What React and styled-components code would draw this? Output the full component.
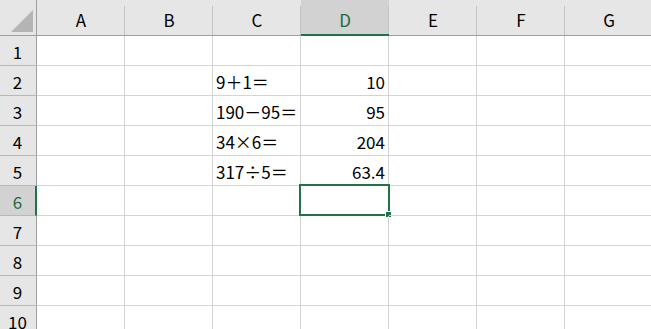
import React from 'react'
import styled, { createGlobalStyle } from 'styled-components'

const GlobalStyle = createGlobalStyle`
  html, body {
    margin: 0;
    padding: 0;
    background: #ffffff;
  }
  body {
    font-family: "Noto Sans CJK JP", "Noto Sans", sans-serif;
    overflow: hidden;
  }
`

const colors = {
  header: '#e6e6e6',
  headerActive: '#d2d2d2',
  headerLine: '#9f9f9f',
  headerSep: '#c4c4c4',
  grid: '#d4d4d4',
  green: '#217346',
  activeText: '#1d6a40',
}

const COLS = ['A', 'B', 'C', 'D', 'E', 'F', 'G']
const ROWS = 10

const cells = {
  2: { C: '9＋1＝', D: '10' },
  3: { C: '190－95＝', D: '95' },
  4: { C: '34×6＝', D: '204' },
  5: { C: '317÷5＝', D: '63.4' },
}

const activeCol = 'D'
const activeRow = 6

const Sheet = styled.div`
  display: grid;
  grid-template-columns: 37px repeat(7, 88px);
  grid-template-rows: 36px repeat(${ROWS}, 30px);
  width: 651px;
  height: 329px;
  overflow: hidden;
  font-size: 17px;
  color: #000;
`

const Corner = styled.div`
  position: relative;
  background: ${colors.header};
  border-right: 1px solid ${colors.headerLine};
  border-bottom: 1px solid ${colors.headerLine};
  box-sizing: border-box;

  &::before {
    content: '';
    position: absolute;
    left: 11px;
    top: 10px;
    width: 0;
    height: 0;
    border-left: 22px solid transparent;
    border-bottom: 22px solid #b4b4b4;
  }
`

const ColHeader = styled.div`
  position: relative;
  display: flex;
  align-items: center;
  justify-content: center;
  box-sizing: border-box;
  padding-top: 4px;
  background: ${(p) => (p.$active ? colors.headerActive : colors.header)};
  border-bottom: ${(p) =>
    p.$active ? `2px solid ${colors.green}` : `1px solid ${colors.headerLine}`};
  color: ${(p) => (p.$active ? colors.activeText : '#000')};
  font-size: 17px;

  &::after {
    content: '';
    position: absolute;
    right: 0;
    top: 6px;
    bottom: 0;
    width: 1px;
    background: ${colors.headerSep};
  }
`

const RowHeader = styled.div`
  display: flex;
  align-items: center;
  justify-content: center;
  box-sizing: border-box;
  background: ${(p) => (p.$active ? colors.headerActive : colors.header)};
  border-right: ${(p) =>
    p.$active ? `2px solid ${colors.green}` : `1px solid ${colors.headerLine}`};
  border-bottom: 1px solid #b8b8b8;
  color: ${(p) => (p.$active ? colors.activeText : '#000')};
  font-size: 17px;
  padding-top: 1px;
  padding-right: ${(p) => (p.$active ? '0' : '1px')};
`

const Cell = styled.div`
  position: relative;
  display: flex;
  align-items: center;
  justify-content: ${(p) => (p.$numeric ? 'flex-end' : 'flex-start')};
  box-sizing: border-box;
  border-right: 1px solid ${colors.grid};
  border-bottom: 1px solid ${colors.grid};
  padding: 1px 3px 0 3px;
  white-space: nowrap;
`

const Selection = styled.div`
  position: absolute;
  left: -2px;
  top: -2px;
  width: 91px;
  height: 32px;
  box-sizing: border-box;
  border: 2px solid ${colors.green};
  pointer-events: none;

  &::after {
    content: '';
    position: absolute;
    right: -3px;
    bottom: -3px;
    width: 5px;
    height: 5px;
    background: ${colors.green};
    outline: 1px solid #ffffff;
  }
`

const App = () => {
  return (
    <>
      <GlobalStyle />
      <Sheet>
        <Corner />
        {COLS.map((c) => (
          <ColHeader key={c} $active={c === activeCol}>
            {c}
          </ColHeader>
        ))}
        {Array.from({ length: ROWS }, (_, i) => i + 1).map((r) => (
          <React.Fragment key={r}>
            <RowHeader $active={r === activeRow}>{r}</RowHeader>
            {COLS.map((c) => {
              const value = cells[r] && cells[r][c]
              const isActive = r === activeRow && c === activeCol
              return (
                <Cell key={c} $numeric={c === 'D'}>
                  {value}
                  {isActive && <Selection />}
                </Cell>
              )
            })}
          </React.Fragment>
        ))}
      </Sheet>
    </>
  )
}

export default App
